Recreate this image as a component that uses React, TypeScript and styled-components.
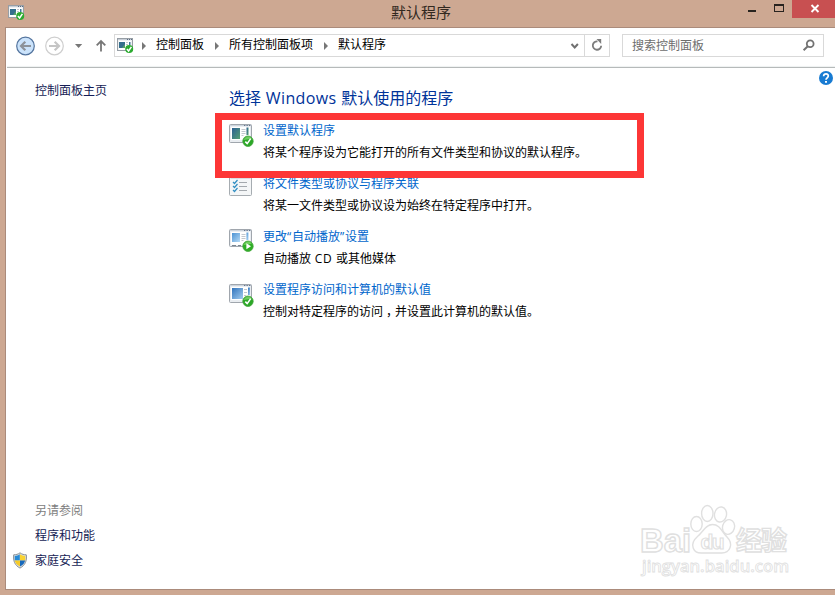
import React from "react";
import styled, { createGlobalStyle } from "styled-components";

const GlobalStyle = createGlobalStyle`
  * { box-sizing: border-box; }
  body { margin: 0; overflow: hidden; }
`;

const Desktop = styled.div`
  position: relative;
  display: flex;
  flex-direction: column;
  width: 835px;
  height: 595px;
  background: #cda892;
  color: #000;
  font-family: "Open Sans", "Noto Sans CJK SC", sans-serif;
  font-size: 12px;
  line-height: 18px;
  white-space: nowrap;
  overflow: hidden;
`;

const TitleBar = styled.header`
  display: grid;
  grid-template-columns: 391px 1fr auto;
  height: 27px;
  flex: none;
`;

const TitleIcon = styled.div`
  padding: 5px 0 0 8px;
  svg { display: block; }
`;

const Title = styled.h1`
  margin: 0;
  font-size: 15px;
  line-height: 25px;
  font-weight: 400;
  color: #33291f;
`;

const WindowButtons = styled.div`
  display: flex;
  height: 18px;
`;

const WindowButton = styled.button<{ $width: number; $close?: boolean }>`
  width: ${(p) => p.$width}px;
  height: 18px;
  padding: 0;
  border: 0;
  background: ${(p) => (p.$close ? "#c85051" : "transparent")};
  svg { display: block; }
`;

const Frame = styled.main`
  display: flex;
  flex-direction: column;
  flex: none;
  height: 563px;
  margin-left: 5px;
  border: solid #ab8b7b;
  border-width: 1px 0 1px 1px;
  background: #fff;
`;

const NavBar = styled.nav`
  display: flex;
  align-items: flex-start;
  flex: none;
  height: 40px;
  margin-left: 1px;
  padding-top: 6px;
  border-bottom: 1px solid #b6baba;
  box-shadow: inset 0 -2px 1px -1px #eef1f1;
`;

const NavIcons = styled.div`
  width: 107px;
  height: 24px;
  svg { display: block; }
`;

const AddressBar = styled.div`
  display: flex;
  width: 496px;
  height: 23px;
  border: 1px solid #d9d9d9;
`;

const AddressIcon = styled.div`
  width: 25px;
  padding: 3px 0 0 2px;
  svg { display: block; }
`;

const Crumb = styled.span<{ $width: number }>`
  display: flex;
  width: ${(p) => p.$width}px;
  line-height: 20px;
`;

const CrumbArrow = styled.i`
  width: 0;
  height: 0;
  margin: 7px 10px 0 2px;
  border: solid transparent;
  border-width: 4px 0 4px 4px;
  border-left-color: #777;
`;

const AddressEnd = styled.div<{ $divided?: boolean }>`
  width: ${(p) => (p.$divided ? 25 : 19)}px;
  margin-left: ${(p) => (p.$divided ? 0 : "auto")};
  border-left: ${(p) => (p.$divided ? "1px solid #d9d9d9" : "0")};
  svg { display: block; }
`;

const SearchBox = styled.div`
  display: flex;
  justify-content: space-between;
  width: 202px;
  height: 23px;
  margin-left: 12px;
  padding: 0 7px 0 9px;
  border: 1px solid #d9d9d9;
  color: #6d6d6d;
  line-height: 22px;
`;

const Body = styled.div`
  display: flex;
  flex: 1;
  min-height: 0;
`;

const Sidebar = styled.aside`
  display: flex;
  flex-direction: column;
  justify-content: space-between;
  width: 223px;
  padding: 14px 0 19px 6px;
`;

const SideLinks = styled.div`
  display: flex;
  flex-direction: column;
  gap: 7px;
`;

const SideLink = styled.a<{ $muted?: boolean }>`
  display: grid;
  grid-template-columns: 23px auto;
  align-items: center;
  height: 18px;
  color: ${(p) => (p.$muted ? "#808080" : "#151c55")};
  svg { display: block; margin-top: -1px; }
`;

const Content = styled.section`
  flex: 1;
`;

const Heading = styled.h2`
  margin: 17px 0 0;
  height: 26px;
  font-size: 16px;
  font-weight: 400;
  line-height: 26px;
  color: #003399;
`;

const Latin = styled.span`
  margin: 0 0.4px 0 0.6px;
  letter-spacing: 0.4px;
`;

const Tasks = styled.div`
  padding-top: 11px;
`;

const Task = styled.article`
  display: grid;
  grid-template-columns: 34px auto;
  height: 53px;
`;

const TaskIcon = styled.div<{ $drop: number }>`
  padding-top: ${(p) => p.$drop}px;
  svg { display: block; }
`;

const TaskLink = styled.a`
  display: block;
  height: 22px;
  color: #0066cc;
`;

const Quote = styled.span`
  letter-spacing: 0.8px;
`;

const TaskText = styled.p`
  margin: 0;
`;

const WideWord = styled.span`
  margin: 0 0.6px;
  letter-spacing: 0.7px;
`;

const Comma = styled.span`
  margin: 0 -3px 0 3px;
`;

const Help = styled.div`
  width: 17px;
  padding-top: 2px;
  svg { display: block; }
`;

const Highlight = styled.div`
  position: absolute;
  left: 215px;
  top: 113px;
  width: 429px;
  height: 65px;
  border: 7px solid #fd3636;
`;

const Watermark = styled.svg`
  position: absolute;
  left: 635px;
  top: 500px;
`;

type Kind = "check" | "play" | "access";

function Badge({ play }: { play?: boolean }) {
  return (
    <g>
      <circle cx="19" cy="18.2" r="5.2" fill={play ? "#2fae25" : "#2ba727"} stroke="#43a53b" strokeWidth=".8" />
      <path d="M14.6 17a4.5 4.5 0 0 1 8.2-1.2Z" fill="#8bdc78" opacity=".7" />
      {play ? (
        <path d="M17.4 15.2v6l4.6-3Z" fill="#fff" />
      ) : (
        <path d="m16.300 18.600 1.900 2 3.500-5" fill="none" stroke="#fff" strokeWidth="1.600" />
      )}
    </g>
  );
}

function ProgramIcon({ kind = "check" }: { kind?: Kind }) {
  const fills: Record<Kind, string[]> = {
    check: ["#2c5f94", "#55a072"],
    play: ["#4b92d3", "#b5daf6"],
    access: ["#3174bd", "#a3cdef"],
  };
  const id = `fill-${kind}`;
  const wide = kind === "access";
  return (
    <svg width="26" height="26" viewBox="0 0 26 26">
      <defs>
        <linearGradient id={id} x1="0" y1="0" x2="1" y2="1">
          <stop stopColor={fills[kind][0]} />
          <stop offset="1" stopColor={fills[kind][1]} />
        </linearGradient>
      </defs>
      <rect x=".5" y="1.5" width="22" height={kind === "play" ? 17 : 18} rx="1" fill="#e9edf1" stroke="#a0a6ad" />
      <path d="M1 2.500h21" stroke="#ccd4dd" />
      <path d="M15 2.500h1.300M17.500 2.500h1.300M20 2.500h1.300" stroke="#66758c" />
      <rect x="2" y="4" width="19" height="13" fill="#fff" />
      <rect x="3" y="5" width={wide ? 11 : 8} height={kind === "play" ? 9 : 11} fill={`url(#${id})`} />
      <path
        d={wide ? "M15 6.500h3M15 9.500h3M15 12.500h2" : "M12.500 6.500h4M12.500 8.500h4M12.500 10.500h4M12.500 12.500h2"}
        stroke="#c2c7cd"
      />
      <rect x={wide ? 19 : 17.500} y="4.500" width="2" height="7.500" fill={`url(#${id})`} />
      {kind === "play" && <path d="M3 17.500h4M9 17.500h3" stroke="#7a8590" />}
      <Badge play={kind === "play"} />
    </svg>
  );
}

function SmallProgramIcon() {
  return (
    <svg width="18" height="17" viewBox="0 0 18 17">
      <rect x=".5" y=".5" width="15" height="12" fill="#eef1f3" stroke="#979ea5" />
      <path d="M1 1.500h14" stroke="#c7ced7" />
      <path d="M10 1.500h1M12 1.500h1M14 1.500h1" stroke="#5b6a80" />
      <path d="M2 3h12v9H2Z" fill="#fff" />
      <path d="M2 4h6v6H2Z" fill="#356f8d" />
      <path d="M5 10h3V6Z" fill="#56a06b" />
      <path d="M9 4.500h2M9 6.500h2M9 8.500h1" stroke="#c4c9ce" />
      <path d="M12 4h1.500v3H12Z" fill="#417995" />
      <circle cx="12.200" cy="11" r="4" fill="#2cab30" />
      <path d="m9.900 11 1.700 2 2.800-4.200" fill="none" stroke="#fff" strokeWidth="1.500" />
    </svg>
  );
}

function ListIcon() {
  return (
    <svg width="26" height="26" viewBox="0 0 26 26">
      <rect x=".5" y="1" width="22" height="18.500" rx="1" fill="#f4f6f7" stroke="#a6acb1" />
      <path d="M1.500 2.500h20" stroke="#d8dce0" />
      <path d="M10 6.500h8M10 10.500h8M10 14.500h8" stroke="#a4a9ae" />
      <path d="m4 6 1.500 1.500L8.500 4M4 10l1.500 1.500L8.500 8M4 14l1.500 1.500L8.500 12" fill="none" stroke="#328fc3" strokeWidth="1.200" />
    </svg>
  );
}

function NavDrawing() {
  return (
    <svg width="107" height="24" viewBox="7 34 107 24">
      <circle cx="25.500" cy="46" r="8.800" fill="#cbe3fb" stroke="#53749e" strokeWidth="1.200" />
      <path d="M31 46H21M25.300 41.700 21 46l4.300 4.300" fill="none" stroke="#8d9299" strokeWidth="2.200" />
      <circle cx="54.500" cy="46" r="8.800" fill="#fff" stroke="#cecece" strokeWidth="1.200" />
      <path d="M49 46h10M54.700 41.700 59 46l-4.300 4.300" fill="none" stroke="#c5c5c5" strokeWidth="2.200" />
      <path d="M75 44h7.200l-3.600 4Z" fill="#777" />
      <path d="M101 51.500V41M96.700 45.400 101 41l4.300 4.400" fill="none" stroke="#777" strokeWidth="1.800" />
    </svg>
  );
}

function Shield() {
  return (
    <svg width="16" height="17" viewBox="0 0 16 17">
      <path d="M8 .8c2 1.500 4 2 6.300 2 .7 6-1 10.500-6.300 13.300C2.700 13.300 1 8.800 1.700 2.800 4 2.800 6 2.300 8 .8Z" fill="#dcdfe0" stroke="#8b9297" />
      <path d="M7.800 2.200v6.200H2.700V3.900c2 0 3.500-.5 5.100-1.700Z" fill="#268ad5" />
      <path d="M8 2.200c1.700 1.200 3.300 1.700 5.200 1.700v4.500H8Z" fill="#f9d332" />
      <path d="M2.700 8.400H8v6.200c-3-1.700-4.700-3.700-5.300-6.200Z" fill="#f6ca26" />
      <path d="M8 8.400h5.100c-.5 2.500-2 4.500-5.100 6.200Z" fill="#1769bc" />
    </svg>
  );
}

const tasks = [
  {
    id: "defaults",
    title: "设置默认程序",
    text: "将某个程序设为它能打开的所有文件类型和协议的默认程序。",
    icon: <ProgramIcon />,
    drop: 1,
  },
  {
    id: "associations",
    title: "将文件类型或协议与程序关联",
    text: "将某一文件类型或协议设为始终在特定程序中打开。",
    icon: <ListIcon />,
    drop: 1,
  },
  {
    id: "autoplay",
    title: <>更改<Quote>“</Quote>自动播放<Quote>”</Quote>设置</>,
    text: <>自动播放 <WideWord>CD</WideWord> 或其他媒体</>,
    icon: <ProgramIcon kind="play" />,
    drop: 0,
  },
  {
    id: "access",
    title: "设置程序访问和计算机的默认值",
    text: <>控制对特定程序的访问<Comma>，</Comma>并设置此计算机的默认值。</>,
    icon: <ProgramIcon kind="access" />,
    drop: 2,
  },
];

export default function App() {
  return (
    <>
      <GlobalStyle />
      <Desktop>
        <TitleBar>
          <TitleIcon><SmallProgramIcon /></TitleIcon>
          <Title>默认程序</Title>
          <WindowButtons>
            <WindowButton $width={27} aria-label="最小化">
              <svg width="27" height="18"><path d="M7 10h8v2H7Z" fill="#28231f" /></svg>
            </WindowButton>
            <WindowButton $width={24} aria-label="最大化">
              <svg width="24" height="18"><path d="M6 4h10v8H6ZM7 6v5h8V6Z" fill="#28231f" fillRule="evenodd" /></svg>
            </WindowButton>
            <WindowButton $width={43} $close aria-label="关闭">
              <svg width="43" height="18"><path d="m19.500 5 7 7m0-7-7 7" stroke="#fff" strokeWidth="1.900" /></svg>
            </WindowButton>
          </WindowButtons>
        </TitleBar>
        <Frame>
          <NavBar>
            <NavIcons><NavDrawing /></NavIcons>
            <AddressBar>
              <AddressIcon><SmallProgramIcon /></AddressIcon>
              <Crumb $width={73}><CrumbArrow />控制面板</Crumb>
              <Crumb $width={109}><CrumbArrow />所有控制面板项</Crumb>
              <Crumb $width={80}><CrumbArrow />默认程序</Crumb>
              <AddressEnd>
                <svg width="19" height="21"><path d="m6.500 9 3.200 3.500L12.900 9" fill="none" stroke="#707070" strokeWidth="2" /></svg>
              </AddressEnd>
              <AddressEnd $divided>
                <svg width="24" height="21">
                  <path d="M12.500 6.400a4.200 4.200 0 1 0 3.700 4.400" fill="none" stroke="#7c7c7c" strokeWidth="1.800" />
                  <path d="M11.500 4h4.700v5Z" fill="#7c7c7c" />
                </svg>
              </AddressEnd>
            </AddressBar>
            <SearchBox>
              <span>搜索控制面板</span>
              <svg width="14" height="21">
                <circle cx="8.200" cy="8.700" r="3.400" fill="none" stroke="#727272" strokeWidth="1.800" />
                <path d="m5.800 11.300-4.200 4" stroke="#727272" strokeWidth="2" />
              </svg>
            </SearchBox>
          </NavBar>
          <Body>
            <Sidebar>
              <SideLink><span />控制面板主页</SideLink>
              <SideLinks>
                <SideLink $muted><span />另请参阅</SideLink>
                <SideLink><span />程序和功能</SideLink>
                <SideLink><Shield />家庭安全</SideLink>
              </SideLinks>
            </Sidebar>
            <Content>
              <Heading>选择 <Latin>Windows</Latin> 默认使用的程序</Heading>
              <Tasks>
                {tasks.map((task) => (
                  <Task key={task.id}>
                    <TaskIcon $drop={task.drop}>{task.icon}</TaskIcon>
                    <div>
                      <TaskLink>{task.title}</TaskLink>
                      <TaskText>{task.text}</TaskText>
                    </div>
                  </Task>
                ))}
              </Tasks>
            </Content>
            <Help>
              <svg width="17" height="17" viewBox="0 0 17 17">
                <circle cx="8" cy="8" r="7" fill="#187bd2" />
                <path d="M5.600 6.200C5.800 3.200 10.500 3.300 10.300 6c-.1 1.700-2.300 1.900-2.300 3.800" fill="none" stroke="#fff" strokeWidth="1.700" />
                <path d="M7 11h2v1.800H7Z" fill="#fff" />
              </svg>
            </Help>
          </Body>
        </Frame>
        <Highlight />
        <Watermark width="160" height="85" viewBox="635 500 160 85" fill="#fff" stroke="#e0e0e0" strokeWidth="1.400">
          <ellipse cx="696.500" cy="524" rx="5.700" ry="7.500" />
          <ellipse cx="707.300" cy="513.500" rx="5.700" ry="8" />
          <ellipse cx="720.500" cy="514.500" rx="6" ry="7.600" transform="rotate(10 720.500 514.500)" />
          <ellipse cx="728.500" cy="527" rx="6" ry="7.400" transform="rotate(15 728.500 527)" />
          <path d="M712.500 524.500c-7 0-9 7-15 12-9 8-4 17 4.500 16.500h19c9 .5 13-9 6-16-5-5-7-12.500-14.500-12.500Z" />
          <g fontFamily="Liberation Sans, sans-serif" fontWeight="700">
            <text x="640" y="552" fontSize="33" textLength="51" lengthAdjust="spacingAndGlyphs">Bai</text>
            <text x="700.500" y="549" fontSize="21" textLength="24" strokeWidth="1.100">du</text>
          </g>
          <text x="736" y="550" fontSize="26" textLength="51" fontFamily="Noto Sans CJK SC, sans-serif" fontWeight="700">经验</text>
          <text x="642" y="572" fontSize="16" textLength="147" lengthAdjust="spacingAndGlyphs" fontFamily="Open Sans, sans-serif" fontWeight="600" strokeWidth=".8">jingyan.baidu.com</text>
        </Watermark>
      </Desktop>
    </>
  );
}
